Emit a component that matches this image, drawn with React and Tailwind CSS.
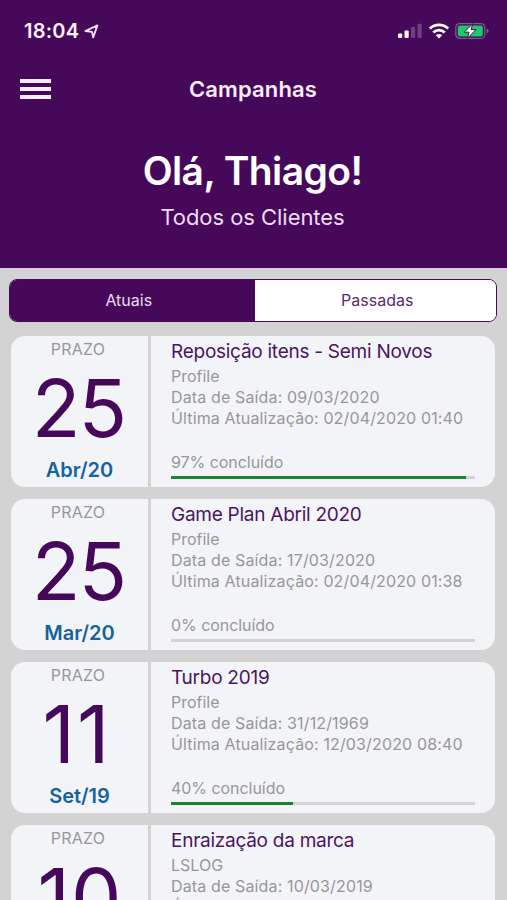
import { useState } from 'react';

const campaigns = [
  {
    id: 1,
    day: '25',
    month: 'Abr/20',
    title: 'Reposição itens - Semi Novos',
    client: 'Profile',
    startDate: '09/03/2020',
    updatedAt: '02/04/2020 01:40',
    progress: 97,
    dayClass: 'mr-[2px] tracking-[-2px]',
  },
  {
    id: 2,
    day: '25',
    month: 'Mar/20',
    title: 'Game Plan Abril 2020',
    client: 'Profile',
    startDate: '17/03/2020',
    updatedAt: '02/04/2020 01:38',
    progress: 0,
    dayClass: 'mr-[2px] tracking-[-2px]',
  },
  {
    id: 3,
    day: '11',
    month: 'Set/19',
    title: 'Turbo 2019',
    client: 'Profile',
    startDate: '31/12/1969',
    updatedAt: '12/03/2020 08:40',
    progress: 40,
    dayClass: 'mr-[5px] tracking-[2px]',
  },
  {
    id: 4,
    day: '10',
    month: 'Mar/19',
    title: 'Enraização da marca',
    client: 'LSLOG',
    startDate: '10/03/2019',
    updatedAt: '10/03/2019 09:12',
    progress: 0,
    dayClass: 'ml-[1px] tracking-[1px]',
  },
];

const StatusBar = () => (
  <div className="flex h-[62px] items-center justify-between pl-[24px] pr-[17px] text-white">
    <div className="flex items-center gap-[5px]">
      <span className="text-[20px] leading-none font-semibold tracking-[0.2px] text-[#fbf3fd]">18:04</span>
      <svg width="15" height="15" viewBox="0 0 15 15" fill="none" stroke="#f3e4f7" strokeWidth="1.8" strokeLinejoin="round">
        <path d="M1.4 7 13.4 1.4 9.2 13.4 8 7.8Z" />
      </svg>
    </div>
    <div className="flex items-center">
      <svg width="24" height="16" viewBox="0 0 24 16" fill="currentColor">
        <rect x="0" y="10.5" width="4.2" height="4.5" rx="1" />
        <rect x="6.5" y="7.5" width="4.2" height="7.5" rx="1" />
        <rect x="13" y="4" width="4.2" height="11" rx="1" opacity="0.22" />
        <rect x="19.5" y="0.8" width="4.2" height="14.2" rx="1" opacity="0.22" />
      </svg>
      <svg className="ml-[7px]" width="20" height="16" viewBox="0 0 20 16" fill="none" stroke="currentColor" strokeWidth="2.8">
        <path d="M0.9 5.6a13 13 0 0 1 18.2 0" />
        <path d="M4.3 9.5a8.2 8.2 0 0 1 11.4 0" />
        <path d="M10 15.4 6.8 12.2a4.6 4.6 0 0 1 6.4 0Z" fill="currentColor" stroke="none" />
      </svg>
      <svg className="ml-[6px]" width="35" height="18" viewBox="0 0 35 18">
        <rect x="0.8" y="1.6" width="29" height="14.8" rx="4" fill="none" stroke="#7d5a8a" strokeWidth="1.3" />
        <path d="M31.6 6.5v5c1.2-.4 2-1.3 2-2.5s-.8-2.1-2-2.5Z" fill="#7d5a8a" />
        <rect x="2.8" y="3.6" width="25" height="10.8" rx="2.2" fill="#1fc868" />
        <path d="M17.6 1.8 9.2 10.2h4.8L12.4 16.4l8.6-8.8h-4.9Z" fill="#fff" stroke="#46095a" strokeWidth="1" />
      </svg>
    </div>
  </div>
);

const CampaignCard = ({ campaign }) => (
  <div className="flex h-[151px] shrink-0 overflow-hidden rounded-[14px] bg-[#f3f4f8]">
    <div className="flex w-[140px] shrink-0 flex-col items-center border-r-[3px] border-[#d4d4d6] whitespace-nowrap">
      <span className="mt-[3px] mr-[3px] text-[16px] leading-[21px] tracking-[0.2px] text-[#97979b]">PRAZO</span>
      <span className={`mt-[8px] text-[80px] leading-[80px] text-[#45085a] ${campaign.dayClass}`}>
        {campaign.day}
      </span>
      <span className="mt-[9px] text-[20px] leading-[26px] font-semibold text-[#17639b]">{campaign.month}</span>
    </div>
    <div className="flex-1 pt-[3px] pr-[20px] pl-[20px] text-[16px] leading-[21px] whitespace-nowrap text-[#97979b]">
      <h2 className="mb-[1px] text-[19px] leading-[26px] tracking-[-0.26px] text-[#4b1560]">{campaign.title}</h2>
      <p>{campaign.client}</p>
      <p className="tracking-[0.14px]">Data de Saída: {campaign.startDate}</p>
      <p className="tracking-[0.14px]">Última Atualização: {campaign.updatedAt}</p>
      <p className="mt-[23px] tracking-[-0.05px]">{campaign.progress}% concluído</p>
      <div className="mt-[3px] h-[3px] bg-[#d2d3d6]">
        <div className="h-full bg-[#19862f]" style={{ width: `${campaign.progress}%` }} />
      </div>
    </div>
  </div>
);

const App = () => {
  const [tab, setTab] = useState('atuais');

  const tabClass = (name) =>
    `flex-1 pb-[2px] text-[16px] ${tab === name ? 'bg-[#46095a] text-[#eadcf0]' : 'bg-white text-[#5a2a6b]'}`;

  return (
    <div className="flex h-[900px] w-[507px] flex-col overflow-hidden bg-[#d3d3d3] font-['Inter',sans-serif]">
      <header className="h-[268px] shrink-0 bg-[#46095a] text-white">
        <StatusBar />
        <div className="grid h-[54px] grid-cols-[1fr_auto_1fr] items-center pl-[20px] pr-[21px]">
          <button aria-label="Menu" className="flex w-[31px] flex-col gap-[4px]">
            <span className="h-[4px] bg-[#f7ecfa]" />
            <span className="h-[4px] bg-[#f7ecfa]" />
            <span className="h-[4px] bg-[#f7ecfa]" />
          </button>
          <h1 className="text-[22px] leading-none font-semibold tracking-[0.15px] text-[#f7ecfa]">Campanhas</h1>
        </div>
        <div className="mt-[31px] mr-[2px] text-center">
          <p className="text-[39px] leading-[48px] font-semibold tracking-[-0.6px]">Olá, Thiago!</p>
          <p className="mt-[8px] text-[22px] leading-[28px] tracking-[-0.05px] text-[#ecdcf2]">Todos os Clientes</p>
        </div>
      </header>

      <div className="mt-[11px] mr-[10px] ml-[9px] flex h-[43px] shrink-0 overflow-hidden rounded-[8px] border border-[#46095a]">
        <button className={`${tabClass('atuais')} pr-[7px]`} onClick={() => setTab('atuais')}>
          Atuais
        </button>
        <button className={`${tabClass('passadas')} pl-[4px]`} onClick={() => setTab('passadas')}>
          Passadas
        </button>
      </div>

      <main className="mt-[14px] flex flex-col gap-[12px] pr-[12px] pl-[11px]">
        {campaigns.map((campaign) => (
          <CampaignCard key={campaign.id} campaign={campaign} />
        ))}
      </main>
    </div>
  );
};

export default App;
